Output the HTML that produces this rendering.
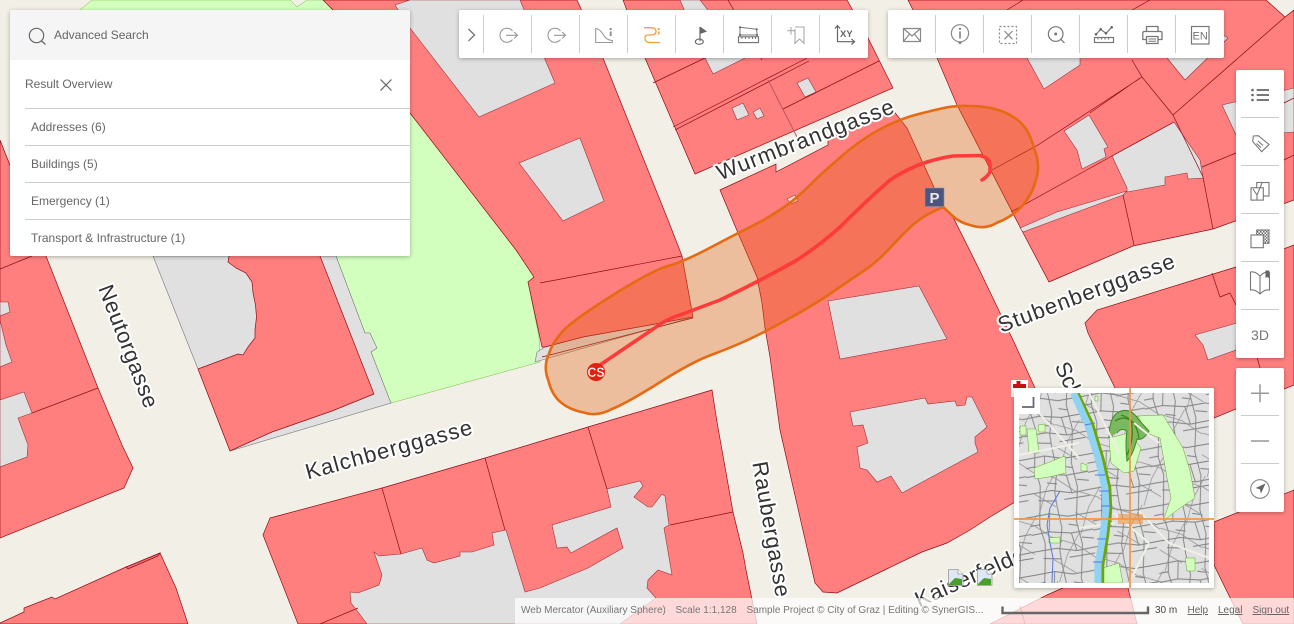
<!DOCTYPE html>
<html lang="en"><head><meta charset="utf-8"><title>Map</title>
<style>
html,body{margin:0;padding:0;width:1294px;height:624px;overflow:hidden;background:#f2efe6;font-family:"Liberation Sans",sans-serif}
svg{position:absolute;left:0;top:0;display:block}
.card{position:absolute;background:#fff;border-radius:2px;box-shadow:0 1px 4px rgba(0,0,0,.3)}
.t{position:absolute;font-size:12px;line-height:14px;color:#666;white-space:nowrap}
.hr{position:absolute;left:25px;width:385px;height:1px;background:#ccc}
#st{position:absolute;left:515px;top:598px;width:779px;height:26px;background:rgba(255,255,255,.7)}
#st span{position:absolute;top:7px;font-size:10px;line-height:12px;color:#777;white-space:nowrap}
#st u{color:#666}
</style></head><body>

<svg width="1294" height="624" viewBox="0 0 1294 624">
<rect width="1294" height="624" fill="#f2efe6"/>
<!-- green -->
<polygon fill="#d2ffbe" stroke="#7ab84a" stroke-width=".5" points="92,0 290,0 297,7 307,0 323,0 333,10 410,113 516,250 534,277 528,282 539,337 540,362 391,403 371,352 377,348 370,333 365,333 336,256 80,10"/>
<g fill="#e0e0e0" stroke="#777" stroke-width=".6">
<polygon points="153,256 198,369 230,451 391,403 371,352 377,348 370,333 365,333 336,256"/>
<polygon points="535,362 537,352 545,347 583,337 650,325 693,317"/>
</g>
<g fill="#ff7f7f" stroke="#960a14" stroke-width=".7">
<polygon points="0,140 46,256 98,388 122,445 133,468 124,488 0,538"/>
<polygon points="320,256 374,394 332,411 272,432 230,451 198,369 238,354 243,355 248,347 255,338 255,330 256.5,317 255.5,305 253,293 252,282 246,273 236,268 228,262 229,256 229,200 320,200"/>
<polygon points="323,0 577,0 603,58 668,220 682,256 693,317 650,325 583,337 545,347 542,347 528,282 534,277 516,250 410,113 333,10"/>
<polygon points="623,0 847,0 868,38 893,88 695,174 645,58"/>
<polygon points="720,190 776,164 776,172 828,145 828,139 893,110 907,128 943,207 953,217 978,267 1013,340 1035,388 1060,450 1015,502 990,517 970,530 947,543 922,552 837,593 823,592 815,583 780,430 770,357 765,328 762,303 757,277 738,233"/>
<polygon points="908,0 1266,0 1285,17 1294,10 1294,200 1213,229 1133,246 1049,282 1020,227 957,105 937,58"/>
<polygon points="1294,245 1236,267 1097,310 1085,323 1088,333 1115,388 1160,470 1214,418 1294,385"/>
<polygon points="1214,522 1294,490 1294,624 1243,624 1214,565"/>
<polygon points="990,624 1047,595 1130,558 1128,588 1137,624"/>
<polygon points="270,518 382,488 485,458 588,427 712,390 717,422 733,512 743,553 746,570 757,624 298,624 263,535"/>
<polygon points="0,623 24,612 24,608 52,597 55,599 126,567 160,553 176,588 188,624 0,624"/>
<polygon fill="#e8686c" points="126,567 160,553 158,556 128,569"/>
</g>
<g fill="#e0e0e0" stroke="#a0303a" stroke-width=".6">
<polygon points="395,5 410,28 479,117 555,83 520,0 410,0"/>
<polygon points="580,138 604,201 563,221 519,163"/>
<polygon points="680,0 700,0 745,58 713,74 705,58"/>
<polygon points="732,108 743,103 749,115 737,120"/>
<polygon points="753,112 760,108 764,116 757,119"/>
<polygon points="797,83 808,78 816,92 805,97"/>
<polygon points="828,301 919,286 947,339 840,359"/>
<polygon points="850,412 925,398 928,404 955,401 957,406 965,405 967,397 972,397 987,427 975,437 975,443 978,452 902,493 891,476 877,482 867,470 860,468 857,447 868,443 863,425 853,426"/>
<polygon points="355,608 367,624 620,624 656,598 647,588 648,580 658,570 672,575 664,528 669,525 665,496 662,494 652,507 648,507 634,497 643,486 640,481 607,489 611,507 552,525 557,548 567,547 571,553 617,528 623,548 588,568 540,588 525,592 506,530 492,533 494,545 472,552 460,552 460,556 434,563 427,560 422,548 401,554 379,556 374,552 382,575 379,585 358,593 350,592 351,603"/>
<polygon points="1027,58 1080,50 1080,65 1044,89"/>
<polygon points="1167,58 1185,80 1228,38 1215,30 1160,50"/>
<polygon points="1064,131 1089,115 1108,147 1104,149 1106,157 1082,169 1077,150"/>
<polygon points="1112,156 1174,122 1200,160 1203,178 1188,179 1187,173 1165,177 1165,185 1127,192 1127,188"/>
<polygon points="1127,191 1057,212 1020,228 1023,232 1123,195"/>
<polygon points="1222,105 1294,88 1294,132 1237,137"/>
<polygon points="1195,335 1237,323 1236,350 1208,360 1203,345"/>
<polygon points="0,302 8,302 10,312 0,316"/>
<polygon points="0,320 6,345 12,362 0,367"/>
<polygon points="0,400 24,392 32,413 18,418 28,445 27,457 0,467"/>
</g>
<g fill="none" stroke="#960a14" stroke-width=".7">
<path d="M0 269L32 256M98 388L32 413M682 256L540 283M542 357L693 318"/>
<path d="M382 488L401 554M485 458L505 530M588 427L607 489M670 525L733 512M358 608L320 624"/>
<path d="M653 83L705 58M673 127L807 58M675 130L809 61M783 109L879 61M728 0L762 60"/>
<path d="M1142 77L1038 145 992 170M1174 122L1112 156 1011 212M1173 115L1285 17M1173 115L1236 60M1132 60L1142 77 1173 115 1203 177 1213 229M1202 167L1236 153M1123 195L1134 245M1212 273L1220 297 1230 293 1236 305M1140 78L1090 113M1007 10L1023 0M1132 10L1150 0M1257 357L1260 368M1020 606L1025 624M1284 103L1294 98M1284 160L1294 155"/>
</g>
<path d="M768 80L797 137" stroke="#c05560" stroke-width="1" fill="none"/>
<polygon points="787,199 795,195 798,201 791,204" fill="#e8e0d0" stroke="#a33" stroke-width=".6"/>
<!-- buffer -->
<path fill="rgba(225,90,10,.33)" stroke="#e66a12" stroke-width="2.600" stroke-linejoin="round" d="M970 106Q987 106 1000 110.500Q1013 115 1021.500 123.500Q1030 132 1034.500 149.500Q1041 167 1035.500 181Q1032 195 1022 206Q1012 217 997.500 222.500Q985 230 971.500 225.500Q960 223 951.500 215L943 207L931.500 212.500Q920 218 910 227.500Q900 237 888.500 249.500Q877 262 863.500 271Q850 280 833.500 291.500Q817 303 790 318Q763 333 746.500 340.500Q730 348 711 355Q692 362 659.500 382.500Q627 403 612 409Q597 417 583.500 412.500Q570 410 561 402.500Q552 395 548.500 381Q543 367 548.500 355Q552 343 562.500 331.500Q573 320 613 295Q653 270 668 266Q683 262 710.500 247.500Q738 233 754 225Q770 217 783.500 207.500Q797 198 810 185Q823 172 843 155Q863 138 881.500 128.500Q900 119 915 115Q930 111 941.500 108.500Q953 105.500 970 106Z"/>
<path d="M597 367L662 323Q670 318 680 315L720 300Q760 281 797 260Q820 245 840 227Q865 202 890 180Q908 168 927 162Q940 158 953 156L980 155.500Q990 158 990 165V172Q988 176 982 180" fill="none" stroke="#ff3a3a" stroke-width="3.600" stroke-linejoin="round" stroke-linecap="round"/>
<circle cx="596" cy="372" r="9" fill="#e3200f"/>
<text x="596" y="377" text-anchor="middle" font-family="Liberation Sans" font-size="14" font-weight="bold" fill="#fff" textLength="17" lengthAdjust="spacingAndGlyphs" stroke="#e3200f" stroke-width=".3">CS</text>
<rect x="925" y="188" width="19" height="18.500" fill="#4a5680" stroke="#8a90a8" stroke-width=".6"/>
<text x="934.500" y="203" text-anchor="middle" font-family="Liberation Sans" font-size="15" font-weight="bold" fill="#f0e8e0">P</text>
<!-- labels -->
<g font-family="Liberation Sans" font-size="22" fill="#333" stroke="#fff" stroke-width="4" stroke-linejoin="round" style="paint-order:stroke fill">
<text transform="translate(388.500,449) rotate(-15.400)" text-anchor="middle" dy="8" textLength="172" lengthAdjust="spacing">Kalchberggasse</text>
<text transform="translate(805,139) rotate(-21.200)" text-anchor="middle" dy="8" textLength="188" lengthAdjust="spacing">Wurmbrandgasse</text>
<text transform="translate(1086,292.500) rotate(-20.600)" text-anchor="middle" dy="8" textLength="187" lengthAdjust="spacing">Stubenberggasse</text>
<text transform="translate(129,346) rotate(68.800)" text-anchor="middle" dy="8" textLength="130" lengthAdjust="spacing">Neutorgasse</text>
<text transform="translate(772,529) rotate(80)" text-anchor="middle" dy="8" textLength="137" lengthAdjust="spacing">Raubergasse</text>
<text transform="translate(1065,370) rotate(65)" dx="-8" dy="8">Schlögelgasse</text>
<text transform="translate(923,597) rotate(-24)" dx="-8" dy="8" letter-spacing=".8">Kaiserfeldgasse</text>
</g>
<!-- broken images -->
<g>
<path d="M948.500 569.500H958L963 574V585.500H948.500Z" fill="#dde8f5" stroke="#999" stroke-width=".8"/>
<path d="M958 569.500V574H963" fill="#fff" stroke="#999" stroke-width=".8"/>
<path d="M949 584L955 578 962 579V585H949Z" fill="#4a9e2e"/>
<path d="M977.500 569.500H987L992 574V585.500H977.500Z" fill="#dde8f5" stroke="#999" stroke-width=".8"/>
<path d="M987 569.500V574H992" fill="#fff" stroke="#999" stroke-width=".8"/>
<path d="M978 584L984 578 991 579V585H978Z" fill="#4a9e2e"/>
</g>
<!-- red cross -->
<rect x="1011" y="380" width="17" height="17" fill="#fff"/>
<path d="M1018.500 381V393M1013 386H1026" stroke="#d01010" stroke-width="4" fill="none"/>
</svg>

<!-- overview map -->
<div class="card" style="left:1014px;top:388px;width:200px;height:200px"></div>
<svg style="left:1019px;top:393px" width="190" height="190" viewBox="0 0 190 190">
<defs>
<pattern id="pa" width="62" height="58" patternUnits="userSpaceOnUse" patternTransform="rotate(-5)">
<path fill="none" stroke="#808080" stroke-width=".9" d="M0 9L20 7 38 11 62 9M0 27L18 25 40 28 62 26M0 44L24 42 44 46 62 44M11 0L9 18 13 36 11 58M28 0L31 22 27 44 28 58M48 0L46 16 50 40 48 58M0 18L10 17M38 19L47 21M20 34L30 36M50 33L62 35M10 51L28 53M36 52L62 50M20 7L18 25M40 28L44 46"/>
</pattern>
<pattern id="pb" width="46" height="52" patternUnits="userSpaceOnUse" patternTransform="rotate(24)">
<path fill="none" stroke="#909090" stroke-width=".7" d="M0 14L22 11 46 15M8 34L34 37M20 0L18 24 22 52"/>
</pattern>
</defs>
<rect width="190" height="190" fill="#e0e0e0"/>
<rect width="190" height="190" fill="url(#pa)"/>
<rect width="190" height="190" fill="url(#pb)"/>
<g fill="#d2ffbe" stroke="#6aa030" stroke-width=".5">
<path d="M119 23L144 22 164 55 171 78 176 105 161 115 144 128 152 105 148 85 141 45 128 40Z"/>
<path d="M15 75L46 63 47 80 30 84 16 86Z"/>
<path d="M1 33L7 33 7 42 1 42ZM19 32L26 31 26 39 20 39ZM8 36L17 36 20 60 10 60Z"/>
<path d="M84 175L100 170 104 190 84 190Z"/>
<path d="M166 165L176 165 176 178 168 178Z"/>
<path d="M90 45L110 40 122 55 115 78 105 80 92 70Z"/>
<path d="M30 145L41 144 41 150 30 150ZM62 70L68 72 68 78 62 78ZM76 3L79 3 79 8 76 8Z"/>
</g>
<path d="M90 45Q90 26 98 20 108 14 116 22 124 32 130 38 124 48 118 46 114 62 108 68 106 50 108 38 102 34 98 40 96 52Z" fill="#7ab862" stroke="#3f8a1e" stroke-width="1"/>
<path d="M96 28Q108 20 118 34M102 22Q118 26 120 46M112 28Q116 44 108 62" fill="none" stroke="#3f8a1e" stroke-width="1.400"/>
<g fill="none" stroke="#f2efe6" stroke-width="2">
<path d="M120 118L150 150 190 165M70 0L100 60M0 62L60 50M95 120L130 150M140 50L115 30M20 20L60 65M96 130L60 135M130 150L110 190"/>
</g>
<path d="M56 0L71 32 81 65 88 95 89 115 86 142 81 172 81 190" fill="none" stroke="#6aa800" stroke-width="8.500"/>
<path d="M54.500 0L69 32 79 65 86 95 87 115 84 142 79 172 79 190" fill="none" stroke="#8fd2f2" stroke-width="7"/>
<path d="M41 98L31 115 28 132 31 150 34 165 33 190M66 32L76 30M76 82L86 82M80 98L90 98M82 113L92 113M78 146L88 146M74 169L84 169" fill="none" stroke="#5a78e0" stroke-width="1"/>
</svg>
<svg style="left:1014px;top:388px;pointer-events:none" width="200" height="200" viewBox="0 0 200 200">
<rect x="104" y="126" width="25" height="10" fill="rgba(240,150,70,.6)"/>
<path d="M0 131H200M116 0V200" stroke="rgba(240,150,70,.85)" stroke-width="2" fill="none"/>
<rect x="0" y="0" width="26" height="26" fill="#fff"/>
<path d="M8 19H19.500V9" fill="none" stroke="#667" stroke-width="1.800"/>
</svg>

<!-- left panel -->
<div class="card" style="left:10px;top:10px;width:400px;height:246px"></div>
<div style="position:absolute;left:10px;top:10px;width:400px;height:50px;background:#f5f5f5;border-radius:2px 2px 0 0"></div>
<div class="t" style="left:54px;top:28px">Advanced Search</div>
<div class="t" style="left:25px;top:77px">Result Overview</div>
<div class="hr" style="top:108px"></div>
<div class="t" style="left:31px;top:120px">Addresses (6)</div>
<div class="hr" style="top:145px"></div>
<div class="t" style="left:31px;top:157px">Buildings (5)</div>
<div class="hr" style="top:182px"></div>
<div class="t" style="left:31px;top:194px">Emergency (1)</div>
<div class="hr" style="top:219px"></div>
<div class="t" style="left:31px;top:231px">Transport &amp; Infrastructure (1)</div>

<!-- toolbars -->
<div class="card" style="left:459px;top:10px;width:409px;height:48px"></div>
<div class="card" style="left:888px;top:10px;width:336px;height:48px"></div>
<div class="card" style="left:1236px;top:70px;width:48px;height:288px"></div>
<div class="card" style="left:1236px;top:368px;width:48px;height:144px"></div>

<svg width="1294" height="624" viewBox="0 0 1294 624" style="pointer-events:none">
<defs><pattern id="ck" width="3" height="3" patternUnits="userSpaceOnUse"><rect width="1.500" height="1.500" fill="#666"/><rect x="1.500" y="1.500" width="1.500" height="1.500" fill="#666"/></pattern></defs>
<!-- panel icons -->
<circle cx="36.500" cy="35.500" r="7.200" fill="none" stroke="#666" stroke-width="1.200"/>
<path d="M41.500 41L45.500 44.500" stroke="#666" stroke-width="1.200"/>
<path d="M380.500 79.500L391.500 90.500M391.500 79.500L380.500 90.500" stroke="#666" stroke-width="1.200"/>
<!-- separators -->
<path stroke="#ccc" stroke-width="1" d="M483.500 15V53M531.500 15V53M579.500 15V53M627.500 15V53M675.500 15V53M723.500 15V53M771.500 15V53M819.500 15V53M935.500 15V53M983.500 15V53M1031.500 15V53M1079.500 15V53M1127.500 15V53M1175.500 15V53M1241 117.500H1279M1241 165.500H1279M1241 213.500H1279M1241 261.500H1279M1241 309.500H1279M1241 415.500H1279M1241 463.500H1279"/>
<!-- toolbar 1 -->
<path d="M468.500 29L474.500 35 468.500 41" fill="none" stroke="#777" stroke-width="1.400"/>
<g fill="none" stroke="#999" stroke-width="1.100">
<path d="M512.500 31A7 7 0 1 0 512.500 39.500M506 35.300H517.500M514 32L517.500 35.300 514 38.500"/>
<path d="M560.500 31A7 7 0 1 0 560.500 39.500M554 35.300H565.500M562 32L565.500 35.300 562 38.500"/>
<path d="M595.700 28.500V42.500H612.300V40.500C605 40 604 35 601 31.500 599.500 29.800 597.500 28.800 595.700 28.500Z"/>
</g>
<path d="M610.700 28V30M610.700 31.500V36" stroke="#888" stroke-width="1.800"/>
<path d="M644 27.700H651Q656 27.700 656 31.500 656 35 651 35H648Q645 35 645 38 645 42.500 650 42.500H660" fill="none" stroke="#f5a040" stroke-width="1.300"/>
<path d="M658.700 28V30M658.700 31.500V34.500" stroke="#f5a040" stroke-width="1.800"/>
<path d="M700 27V41" stroke="#666" stroke-width="1.200"/>
<path d="M700 26.500L707 31.500 700 34Z" fill="#666"/>
<ellipse cx="699.300" cy="41.700" rx="4" ry="2.600" fill="none" stroke="#666" stroke-width="1.100"/>
<g fill="none" stroke="#777" stroke-width="1">
<path d="M740 27.300L756.700 29.300 757 35H740Z"/>
<rect x="738.500" y="36.800" width="20" height="5.800" stroke-width="1.200"/>
<path d="M742 37V39M745.500 37V39M749 37V39M752.500 37V39M755.500 37V39"/>
</g>
<g fill="#666"><circle cx="740" cy="27.300" r="1.100"/><circle cx="756.700" cy="29.300" r="1.100"/><circle cx="740" cy="35" r="1.100"/><circle cx="757" cy="35" r="1.100"/></g>
<path d="M795 27H804V43.300L799.500 39 795 43.300V29M787.300 30.700H795M791 27V34.500" fill="none" stroke="#aaa" stroke-width="1.100"/>
<path d="M837.500 26V41.700H854M835 28.500L837.500 25.500 840 28.500M851.500 39L854.500 41.700 851.500 44.500" fill="none" stroke="#666" stroke-width="1.200"/>
<text x="840" y="37" font-family="Liberation Sans" font-size="9.500" font-weight="bold" fill="#666">XY</text>
<!-- toolbar 2 -->
<g fill="none" stroke="#888" stroke-width="1.200">
<path d="M903.500 28.500H920.500V41.500H903.500ZM903.500 28.500L912 36 920.500 28.500M903.500 41.500L909.500 34M920.500 41.500L914.500 34"/>
<circle cx="960" cy="33.300" r="8.600"/>
<rect x="999.500" y="26.500" width="17" height="17" stroke-dasharray="2 2"/>
<path d="M1004.500 31L1012.500 39.300M1012.500 31L1004.500 39.300"/>
<circle cx="1055.700" cy="34" r="7.300" stroke="#777"/>
<path d="M1060.800 39.300L1064.500 43" stroke="#777"/>
<rect x="1094.500" y="37.500" width="19" height="5" stroke="#777"/>
<path d="M1098 37.500V39.500M1101.500 37.500V39.500M1105 37.500V39.500M1108.500 37.500V39.500M1096 34.300L1100.700 29.300 1106 33.300 1111.700 27.300" stroke="#777"/>
<rect x="1191.500" y="26.500" width="17.500" height="17.500" stroke="#777"/>
<g stroke="#777" stroke-width="1.300">
<path d="M1146.500 32V26.500H1158V32"/>
<path d="M1146 39.500H1142.800V33Q1142.800 31.500 1144.500 31.500H1160.500Q1162 31.500 1162 33V39.500H1158"/>
<path d="M1146.500 36.500H1158V43.500H1146.500Z" fill="#fff"/>
<path d="M1148.500 39H1156M1148.500 41.200H1156" stroke-width="1"/>
</g>
</g>
<circle cx="960" cy="28.800" r="1.100" fill="#777"/>
<path d="M960 31.500V38.500" stroke="#777" stroke-width="1.500"/>
<path d="M957.800 42L960 44.500 962.200 42Z" fill="#777"/>
<circle cx="1055.700" cy="34" r="1.500" fill="#777"/>
<g fill="#666"><circle cx="1096" cy="34.300" r="1.300"/><circle cx="1100.700" cy="29.300" r="1.300"/><circle cx="1106" cy="33.300" r="1.300"/><circle cx="1111.700" cy="27.300" r="1.300"/></g>
<text x="1200.200" y="39.500" text-anchor="middle" font-family="Liberation Sans" font-size="11" fill="#777">EN</text>
<!-- right -->
<g fill="#666"><circle cx="1252.500" cy="90" r="1.300"/><circle cx="1252.500" cy="95" r="1.300"/><circle cx="1252.500" cy="100" r="1.300"/></g>
<path d="M1256.700 90H1269M1256.700 95H1269M1256.700 100H1269" stroke="#666" stroke-width="1.800"/>
<g fill="none" stroke="#777" stroke-width="1.100">
<path d="M1253.300 136L1258.300 135.700 1269 144.500 1261.700 151.700 1252.700 141.500Z"/>
<path d="M1258 141L1263 145.500M1256.500 143.500L1261 147.500"/>
<rect x="1256.700" y="182.500" width="12.300" height="13.500"/>
<rect x="1251" y="187.800" width="12.300" height="12.300" fill="#fff"/>
<path d="M1253 189L1257 195 1262 183M1257 195V200"/>
<rect x="1256.700" y="230" width="12.300" height="13.300" fill="url(#ck)"/>
<rect x="1251" y="235" width="12.300" height="12.700" fill="#fff"/>
<path d="M1260 276Q1255 271 1250.500 272V290Q1255 289 1260 294 1265 289 1269.500 290V272Q1265 271 1260 276V294"/>
<path d="M1251 393.300H1269M1260 384.300V402.300M1251 441H1269" stroke="#999" stroke-width="1.500"/>
<circle cx="1260" cy="489" r="9.300" stroke="#888"/>
</g>
<path d="M1265.500 270.500H1269V278L1267 277 1265.500 278Z" fill="#666"/>
<path d="M1265.500 483.500L1255.500 488 1259.700 489.300 1261 493.500Z" fill="#666"/>
<text x="1260" y="340" text-anchor="middle" font-family="Liberation Sans" font-size="14" fill="#777">3D</text>
</svg>

<!-- status -->
<div id="st">
<span style="left:6px">Web Mercator (Auxiliary Sphere)</span>
<span style="left:160.500px">Scale 1:1,128</span>
<span style="left:231.500px">Sample Project © City of Graz | Editing © SynerGIS...</span>
<span style="left:640px;color:#444">30 m</span>
<span style="left:672.500px"><u>Help</u></span>
<span style="left:703px"><u>Legal</u></span>
<span style="left:737.500px"><u>Sign out</u></span>
</div>
<svg width="1294" height="624" viewBox="0 0 1294 624" style="pointer-events:none">
<path d="M1002.500 606.500V613H1148V606.500" fill="none" stroke="#666" stroke-width="2.400"/>
</svg>
</body></html>
